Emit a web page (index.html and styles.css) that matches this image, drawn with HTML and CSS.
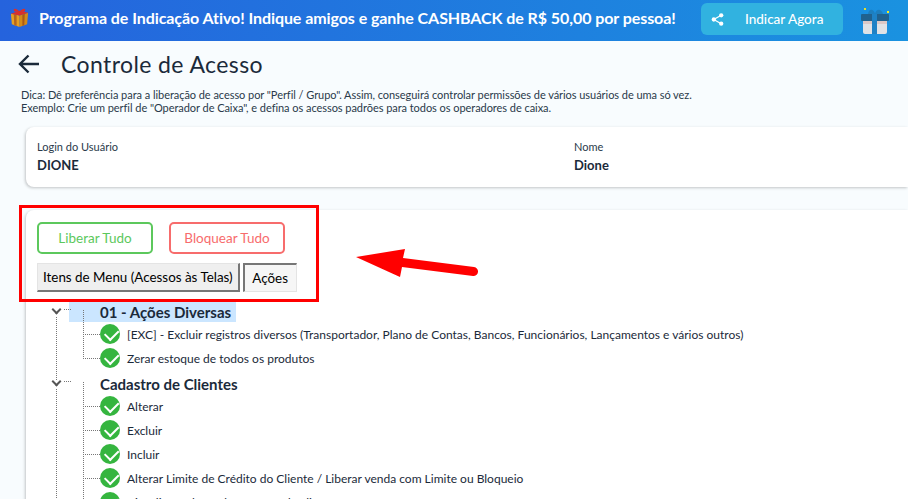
FILE: index.html
```html
<!DOCTYPE html>
<html lang="en">
<head>
    <meta charset="UTF-8">
    <title>Controle de Acesso</title>
    <link rel="stylesheet" href="styles.css">
</head>
<body>
    <div class="promo-bar">
        <svg class="gift" viewBox="0 0 22 22">
            <path d="M2 7 L11 9 L11 21 L3 18 Z" fill="#e8a020"/>
            <path d="M11 9 L20 6 L19 18 L11 21 Z" fill="#d48a18"/>
            <path d="M5 7.500 L8 8.200 L8 20 L5.500 19 Z" fill="#b5651d"/>
            <path d="M14 8 L16.500 7.200 L16 19 L14 20 Z" fill="#a85a18"/>
            <path d="M2 7 L11 4 L20 6 L11 9 Z" fill="#d9302c"/>
            <path d="M11 5 C7 0 3 2 6 5 Z M11 5 C15 0 19 2 16 5 Z" fill="#d9302c"/>
        </svg>
        <div class="promo-text">Programa de Indicação Ativo! Indique amigos e ganhe CASHBACK de R$ 50,00 por pessoa!</div>
        <button class="promo-button">
            <svg class="share" viewBox="0 0 14 14">
                <circle cx="11" cy="2.500" r="2.300"/>
                <circle cx="3" cy="7" r="2.300"/>
                <circle cx="11" cy="11.500" r="2.300"/>
                <path d="M11 2.500 L3 7 L11 11.500" fill="none" stroke="#fff" stroke-width="1.300"/>
            </svg>
            <span class="promo-button-label">Indicar Agora</span>
        </button>
        <svg class="gift-muted" viewBox="0 0 28 28">
            <path d="M7 7 C8 1 13 2 14 7 C15 2 20 1 22 7 Z" fill="#1d7fbf"/>
            <rect x="2" y="13" width="24" height="14" rx="2" fill="#dfe2e6"/>
            <rect x="2" y="14" width="24" height="3" fill="#dcc8c6"/>
            <rect x="0" y="7" width="28" height="7" rx="1" fill="#20628f"/>
            <rect x="11" y="7" width="5" height="20" fill="#1e82c6"/>
            <rect x="3" y="1" width="2" height="2" fill="#e6e02a"/>
            <rect x="26" y="4" width="2" height="2" fill="#f4ee20"/>
        </svg>
    </div>

    <div class="page">
        <div class="page-header">
            <svg class="back" viewBox="0 0 22 20">
                <path d="M21 10 H2 M10.500 1.500 L2 10 L10.500 18.500" fill="none" stroke="#1b2a3a" stroke-width="2.400"/>
            </svg>
            <h1>Controle de Acesso</h1>
        </div>
        <p class="tip">Dica: Dê preferência para a liberação de acesso por "Perfil / Grupo". Assim, conseguirá controlar permissões de vários usuários de uma só vez.<br>Exemplo: Crie um perfil de "Operador de Caixa", e defina os acessos padrões para todos os operadores de caixa.</p>

        <div class="card user-card">
            <div class="user-field user-login">
                <label>Login do Usuário</label>
                <strong>DIONE</strong>
            </div>
            <div class="user-field">
                <label>Nome</label>
                <strong>Dione</strong>
            </div>
        </div>

        <div class="card access-card">
            <div class="bulk-actions">
                <button class="bulk green">Liberar Tudo</button>
                <button class="bulk red">Bloquear Tudo</button>
            </div>
            <div class="tabs">
                <button class="tab">Itens de Menu (Acessos às Telas)</button>
                <button class="tab active">Ações</button>
            </div>

            <div class="tree">
                <div class="group">
                    <div class="group-title"><span class="chevron"></span><span class="group-name selected">01 - Ações Diversas</span></div>
                    <div class="item"><span class="check"></span>[EXC] - Excluir registros diversos (Transportador, Plano de Contas, Bancos, Funcionários, Lançamentos e vários outros)</div>
                    <div class="item"><span class="check"></span>Zerar estoque de todos os produtos</div>
                </div>
                <div class="group">
                    <div class="group-title"><span class="chevron"></span><span class="group-name">Cadastro de Clientes</span></div>
                    <div class="item"><span class="check"></span>Alterar</div>
                    <div class="item"><span class="check"></span>Excluir</div>
                    <div class="item"><span class="check"></span>Incluir</div>
                    <div class="item"><span class="check"></span>Alterar Limite de Crédito do Cliente / Liberar venda com Limite ou Bloqueio</div>
                    <div class="item"><span class="check"></span>Visualizar valores de compras do cliente</div>
                </div>
            </div>
        </div>
    </div>

    <!-- marcacoes por cima do print -->
    <div class="highlight"></div>
    <svg class="red-arrow" viewBox="0 0 130 40">
        <path d="M0 13 L49 5 L47 14 L118 23 A4.500 4.500 0 0 1 117 32 L46 23 L44 33 Z" fill="#f00"/>
    </svg>
</body>
</html>
```

FILE: styles.css
```css
* {
    box-sizing: border-box;
}
html, body {
    height: 100%;
}
body {
    margin: 0;
    overflow: hidden;
    position: relative;
    font-family: Lato, sans-serif;
    background-color: #f8fcfe;
    color: #1b2a3a;
}
button {
    font-family: Lato, sans-serif;
    cursor: pointer;
}
.promo-bar {
    display: flex;
    align-items: flex-start;
    height: 41px;
    padding-left: 9px;
    background: linear-gradient(90deg, #2563dd, #1a92e0);
    color: #fff;
}
.gift {
    width: 21px;
    height: 21px;
    margin-top: 7px;
    flex: none;
}
.promo-text {
    margin-left: 9px;
    width: 661px;
    flex: none;
    font-size: 16px;
    font-weight: 700;
    line-height: 36px;
    letter-spacing: -0.07px;
    white-space: nowrap;
}
.promo-button {
    display: flex;
    align-items: center;
    width: 142px;
    height: 32px;
    margin: 3px 0 0 1px;
    padding: 0 0 0 10px;
    border: none;
    border-radius: 6px;
    background-color: #31b2e0;
    color: #fff;
    flex: none;
}
.share {
    width: 13px;
    height: 13px;
    fill: #fff;
}
.promo-button-label {
    margin-left: 21px;
    font-size: 13.500px;
    font-weight: 500;
}
.gift-muted {
    width: 28px;
    height: 28px;
    margin: 7px 0 0 18px;
    flex: none;
}
.page {
    padding: 0 0 0 26px;
}
.page-header {
    display: flex;
    align-items: center;
    height: 49px;
    padding-bottom: 4px;
}
.back {
    width: 22px;
    height: 20px;
    margin-left: -8px;
}
h1 {
    margin: 0 0 0 21px;
    font-size: 23px;
    font-weight: 400;
    letter-spacing: 0.4px;
    color: #1b2a3a;
}
.tip {
    margin: -2px 0 0 -5px;
    font-size: 11px;
    line-height: 13px;
    letter-spacing: -0.05px;
    color: #2a3a4a;
}
.card {
    background-color: #fff;
    border-radius: 8px 0 0 8px;
    box-shadow: -1px 1px 3px rgba(0, 0, 0, 0.22);
}
.user-card {
    display: flex;
    height: 60px;
    margin-top: 13px;
    padding: 12px 0 0 11px;
}
.user-login {
    width: 537px;
}
.user-field label {
    display: block;
    font-size: 11px;
    line-height: 15px;
    color: #2a3a4a;
}
.user-field strong {
    display: block;
    margin-top: 3px;
    font-size: 13px;
    font-weight: 700;
    line-height: 16px;
    color: #1b2a3a;
}
.access-card {
    height: 320px;
    margin-top: 23px;
    padding: 12px 0 0 11px;
}
.bulk-actions {
    display: flex;
    gap: 16px;
}
.bulk {
    width: 116px;
    height: 32px;
    padding: 0;
    background-color: #fff;
    border: 2px solid;
    border-radius: 5px;
    font-size: 13.500px;
}
.bulk.green {
    border-color: #5cc85c;
    color: #5cc85c;
}
.bulk.red {
    border-color: #f76c6c;
    color: #f76c6c;
}
.tabs {
    display: flex;
    gap: 3px;
    margin-top: 9px;
}
.tab {
    height: 29px;
    padding: 0 5px;
    background-color: #efefef;
    border-style: solid;
    border-width: 1px 2px 2px 1px;
    border-color: #e4e4e4 #777 #777 #e4e4e4;
    font-size: 13.400px;
    white-space: nowrap;
    color: #000;
}
.tab.active {
    width: 54px;
    border-width: 2px 1px 1px 2px;
    border-color: #777 #e4e4e4 #e4e4e4 #777;
    background-color: #f6f6f6;
}
.tree {
    margin: 10px 0 0 12px;
}
.group {
    position: relative;
    margin-bottom: 4px;
}
.group::before {
    content: "";
    position: absolute;
    left: 7px;
    top: 15px;
    bottom: -10px;
    border-left: 1px dotted #777;
}
.group-title {
    position: relative;
    display: flex;
    align-items: center;
    height: 20px;
    color: #1b2a3a;
}
.group-title::after {
    content: "";
    position: absolute;
    left: 15px;
    top: 7px;
    width: 7px;
    border-top: 1px dotted #777;
}
.chevron {
    width: 7px;
    height: 7px;
    margin: -6px 0 0 4px;
    border-right: 2px solid #555;
    border-bottom: 2px solid #555;
    transform: rotate(45deg);
    flex: none;
}
.group-name {
    display: block;
    width: 167px;
    height: 20px;
    margin-left: 9px;
    padding-left: 31px;
    font-size: 15px;
    font-weight: 700;
    line-height: 20px;
    white-space: nowrap;
}
.selected {
    background-color: #cbe6ff;
}
.item {
    position: relative;
    display: flex;
    align-items: center;
    height: 24px;
    margin-left: 51px;
    font-size: 12px;
    white-space: nowrap;
    color: #1b2a3a;
}
.item::before {
    content: "";
    position: absolute;
    left: -17px;
    top: -12px;
    bottom: 11px;
    width: 16px;
    border-left: 1px dotted #777;
    border-bottom: 1px dotted #777;
}
.check {
    position: relative;
    width: 20px;
    height: 20px;
    margin-right: 7px;
    border-radius: 50%;
    background-color: #35b53f;
    flex: none;
}
.check::after {
    content: "";
    position: absolute;
    left: 4.500px;
    top: 5px;
    width: 11px;
    height: 6.500px;
    border-left: 2.500px solid #fff;
    border-bottom: 2.500px solid #fff;
    transform: rotate(-45deg);
}
.highlight {
    position: absolute;
    left: 19px;
    top: 205px;
    width: 300px;
    height: 97px;
    border: 3px solid #f00;
}
.red-arrow {
    position: absolute;
    left: 356px;
    top: 244px;
    width: 130px;
    height: 40px;
}
```
